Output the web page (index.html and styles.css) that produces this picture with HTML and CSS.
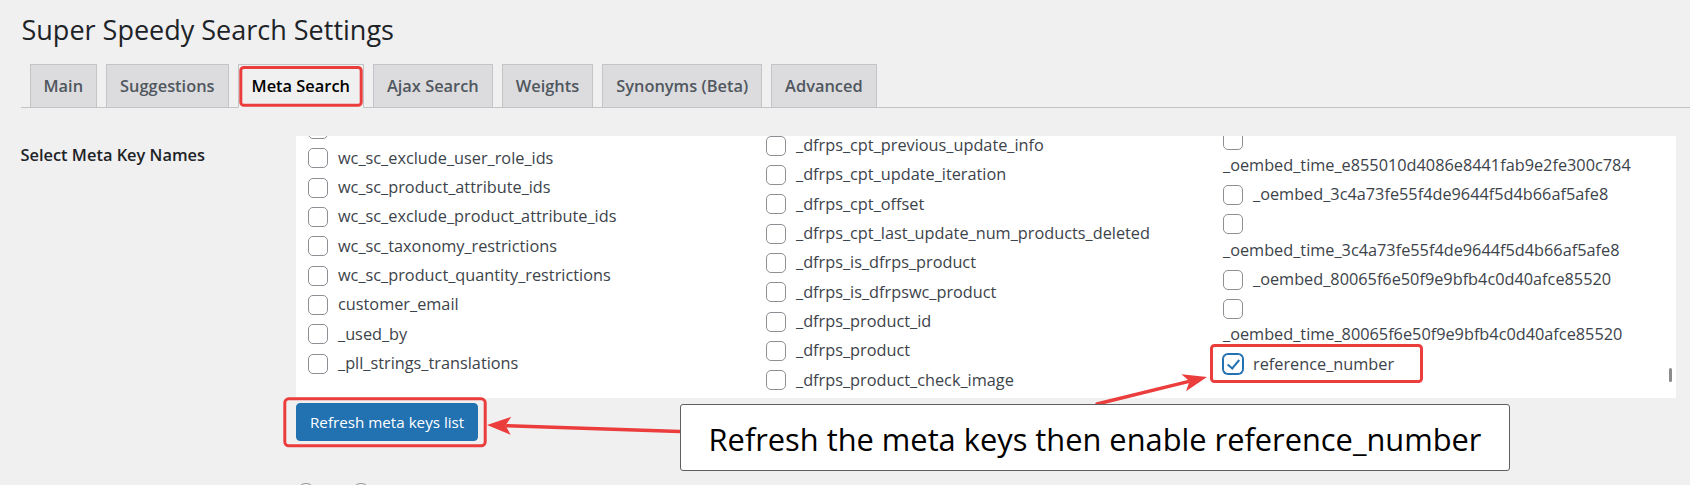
FILE: index.html
```html
<!DOCTYPE html>
<html lang="en">
<head>
<meta charset="utf-8">
<title>Super Speedy Search Settings</title>
<link rel="stylesheet" href="styles.css">
</head>
<body>
<div class="wrap">
  <h1 class="title">Super Speedy Search Settings</h1>
  <nav class="tabs">
    <a class="tab">Main</a>
    <a class="tab">Suggestions</a>
    <a class="tab active">Meta Search</a>
    <a class="tab">Ajax Search</a>
    <a class="tab">Weights</a>
    <a class="tab">Synonyms (Beta)</a>
    <a class="tab">Advanced</a>
  </nav>
  <div class="form-row">
    <div class="th">Select Meta Key Names</div>
    <div class="td">
      <div class="metabox">
        <div class="metacols">
          <div class="col col1">
            <label class="item"><input type="checkbox" class="cb"><span>wc_sc_user_role_ids</span></label>
            <label class="item"><input type="checkbox" class="cb"><span>wc_sc_exclude_user_role_ids</span></label>
            <label class="item"><input type="checkbox" class="cb"><span>wc_sc_product_attribute_ids</span></label>
            <label class="item"><input type="checkbox" class="cb"><span>wc_sc_exclude_product_attribute_ids</span></label>
            <label class="item"><input type="checkbox" class="cb"><span>wc_sc_taxonomy_restrictions</span></label>
            <label class="item"><input type="checkbox" class="cb"><span>wc_sc_product_quantity_restrictions</span></label>
            <label class="item"><input type="checkbox" class="cb"><span>customer_email</span></label>
            <label class="item"><input type="checkbox" class="cb"><span>_used_by</span></label>
            <label class="item"><input type="checkbox" class="cb"><span>_pll_strings_translations</span></label>
          </div>
          <div class="col col2">
            <label class="item"><input type="checkbox" class="cb"><span>_dfrps_cpt_previous_update_info</span></label>
            <label class="item"><input type="checkbox" class="cb"><span>_dfrps_cpt_update_iteration</span></label>
            <label class="item"><input type="checkbox" class="cb"><span>_dfrps_cpt_offset</span></label>
            <label class="item"><input type="checkbox" class="cb"><span>_dfrps_cpt_last_update_num_products_deleted</span></label>
            <label class="item"><input type="checkbox" class="cb"><span>_dfrps_is_dfrps_product</span></label>
            <label class="item"><input type="checkbox" class="cb"><span>_dfrps_is_dfrpswc_product</span></label>
            <label class="item"><input type="checkbox" class="cb"><span>_dfrps_product_id</span></label>
            <label class="item"><input type="checkbox" class="cb"><span>_dfrps_product</span></label>
            <label class="item"><input type="checkbox" class="cb"><span>_dfrps_product_check_image</span></label>
          </div>
          <div class="col col3">
            <label class="item wrapped"><input type="checkbox" class="cb"><span>_oembed_time_e855010d4086e8441fab9e2fe300c784</span></label>
            <label class="item"><input type="checkbox" class="cb"><span>_oembed_3c4a73fe55f4de9644f5d4b66af5afe8</span></label>
            <label class="item wrapped"><input type="checkbox" class="cb"><span>_oembed_time_3c4a73fe55f4de9644f5d4b66af5afe8</span></label>
            <label class="item"><input type="checkbox" class="cb"><span>_oembed_80065f6e50f9e9bfb4c0d40afce85520</span></label>
            <label class="item wrapped"><input type="checkbox" class="cb"><span>_oembed_time_80065f6e50f9e9bfb4c0d40afce85520</span></label>
            <label class="item"><input type="checkbox" class="cb" checked><span>reference_number</span></label>
          </div>
        </div>
        <div class="thumb"></div>
      </div>
      <button class="button" type="button">Refresh meta keys list</button>
    </div>
  </div>
  <div class="form-row next">
    <div class="th"></div>
    <div class="td radios">
      <input type="radio" class="rb" name="mode" aria-label="Option 1">
      <input type="radio" class="rb" name="mode" aria-label="Option 2">
    </div>
  </div>
</div>

<svg class="annot" width="1690" height="485" viewBox="0 0 1690 485" aria-hidden="true">
  <g fill="none" stroke="#ec3d3d" stroke-width="3">
    <rect x="240.8" y="67.5" width="120.4" height="37.7" rx="3"/>
    <rect x="284.8" y="398.8" width="200.4" height="47" rx="4"/>
    <rect x="1211.5" y="345.5" width="210" height="36" rx="3"/>
  </g>
  <g stroke="#ec3d3d" stroke-width="3.5" stroke-linecap="round">
    <line x1="680" y1="431.5" x2="507" y2="425.7"/>
    <line x1="1097" y1="404" x2="1188" y2="381.6"/>
  </g>
  <g fill="#ec3d3d">
    <polygon points="487,425 511.3,416.8 505.5,425.6 510.7,434.8"/>
    <polygon points="1207,377 1181.5,374.2 1189.5,381.3 1186,391.2"/>
  </g>
</svg>
<div class="callout">Refresh the meta keys then enable reference_number</div>
</body>
</html>
```

FILE: styles.css
```css
html, body {
  margin: 0;
  padding: 0;
  overflow: hidden;
}

body {
  position: relative;
  width: 1690px;
  height: 485px;
  background: #f0f0f1;
  color: #3c434a;
  font-family: "Open Sans", "Noto Sans", sans-serif;
}

.wrap {
  padding-left: 20.5px;
}

.title {
  margin: 12px 0 0 1px;
  font-size: 27px;
  line-height: 36px;
  font-weight: 400;
  color: #1d2327;
}

.tabs {
  display: flex;
  align-items: flex-end;
  margin-top: 16px;
  border-bottom: 1px solid #c3c4c7;
}

.tab {
  box-sizing: border-box;
  height: 44px;
  margin: 0 0 -1px 9px;
  padding: 0 13px;
  line-height: 42px;
  font-size: 16.4px;
  font-weight: 600;
  color: #50575e;
  background: #dcdcde;
  border: 1px solid #c3c4c7;
  white-space: nowrap;
}

.tab.active {
  color: #000;
  background: #f0f0f1;
  border-bottom-color: #f0f0f1;
}

.form-row {
  display: grid;
  grid-template-columns: 275.5px 1fr;
  margin-top: 28px;
}

.form-row.next {
  margin-top: 42px;
}

.th {
  padding-top: 6px;
  font-size: 16.4px;
  line-height: 26px;
  font-weight: 600;
  color: #1d2327;
}

.metabox {
  position: relative;
  width: 1380px;
  height: 262px;
  background: #fff;
  overflow: hidden;
}

.metacols {
  display: grid;
  grid-template-columns: 458px 457px 1fr;
  padding-left: 12px;
}

.col1 { margin-top: -20.6px; }
.col2 { margin-top: -4px; }
.col3 { margin-top: -10px; }

.item {
  display: block;
  font-size: 16.3px;
  line-height: 26px;
  margin-bottom: 3.33px;
  white-space: nowrap;
  color: #3c434a;
}

.item.wrapped span {
  display: block;
}

.cb,
.rb {
  -webkit-appearance: none;
  appearance: none;
  position: relative;
  top: -1px;
  box-sizing: border-box;
  width: 20px;
  height: 20px;
  margin: 0 10px 0 0;
  vertical-align: middle;
  border: 1px solid #8c8f94;
  border-radius: 5px;
  background: #fff;
}

.rb {
  top: 0;
  margin: 0;
  border-radius: 50%;
}

.cb:checked {
  border-color: #2271b1;
  box-shadow: 0 0 0 1px #2271b1;
}

.cb:checked::before {
  content: "";
  position: absolute;
  left: 5.5px;
  top: 1.5px;
  width: 5px;
  height: 10px;
  border-right: 2.6px solid #2271b1;
  border-bottom: 2.6px solid #2271b1;
  transform: rotate(40deg);
}

.thumb {
  position: absolute;
  right: 4px;
  top: 232px;
  width: 3.5px;
  height: 14px;
  border-radius: 2px;
  background: #8b8b8b;
}

.button {
  display: block;
  box-sizing: border-box;
  height: 38px;
  margin-top: 5px;
  padding: 0 13px;
  font-family: "Open Sans", "Noto Sans", sans-serif;
  font-size: 15.2px;
  line-height: 36px;
  color: #fff;
  background: #2271b1;
  border: 1px solid #2271b1;
  border-radius: 4px;
}

.radios {
  display: flex;
  align-items: flex-start;
  gap: 35px;
  padding-left: 0;
}

.annot {
  position: absolute;
  left: 0;
  top: 0;
  pointer-events: none;
}

.callout {
  position: absolute;
  left: 680px;
  top: 404px;
  box-sizing: border-box;
  width: 830px;
  height: 67px;
  padding-top: 3px;
  display: flex;
  align-items: center;
  justify-content: center;
  background: #fff;
  border: 1.5px solid #5f5f5f;
  border-radius: 3px;
  font-size: 30.8px;
  color: #000;
  white-space: nowrap;
}
```
